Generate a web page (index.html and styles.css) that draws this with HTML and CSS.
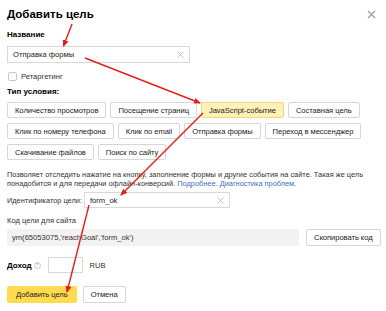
FILE: index.html
```html
<!DOCTYPE html>
<html lang="ru">
  <head>
    <meta charset="utf-8" />
    <meta name="viewport" content="width=device-width, initial-scale=1" />
    <title>Добавить цель</title>
    <link rel="stylesheet" href="styles.css">
  </head>
  <body>
    <div class="dialog">
      <!-- Header -->
      <div class="dialog-head">
        <h1 class="dialog-title">Добавить цель</h1>
        <svg class="close" width="9" height="9" viewBox="0 0 9 9">
          <path d="M1 1L8 8M8 1L1 8" stroke="#999" stroke-width="1.1" fill="none" />
        </svg>
      </div>

      <!-- Goal name -->
      <div class="field-label">Название</div>
      <div class="input input-name">
        <span>Отправка формы</span>
        <svg class="clear" width="7" height="7" viewBox="0 0 7 7">
          <path d="M0.5 0.5L6.5 6.5M6.5 0.5L0.5 6.5" stroke="#bbb" stroke-width="0.9" fill="none" />
        </svg>
      </div>

      <label class="check"><span class="check-box"></span>Ретаргетинг</label>

      <!-- Condition types -->
      <div class="field-label field-label-types">Тип условия:</div>
      <div class="types">
        <div class="types-row">
          <span class="btn">Количество просмотров</span>
          <span class="btn">Посещение страниц</span>
          <span class="btn btn-checked">JavaScript-событие</span>
          <span class="btn">Составная цель</span>
        </div>
        <div class="types-row">
          <span class="btn">Клик по номеру телефона</span>
          <span class="btn">Клик по email</span>
          <span class="btn">Отправка формы</span>
          <span class="btn">Переход в мессенджер</span>
        </div>
        <div class="types-row">
          <span class="btn">Скачивание файлов</span>
          <span class="btn">Поиск по сайту</span>
        </div>
      </div>

      <p class="hint">
        Позволяет отследить нажатие на кнопку, заполнение формы и другие события на сайте. Такая же цель<br>
        понадобится и для передачи офлайн-конверсий. <a href="#">Подробнее</a>. <a href="#">Диагностика проблем</a>.
      </p>

      <!-- Goal id -->
      <div class="id-row">
        <span class="id-label">Идентификатор цели:</span>
        <div class="input input-id">
          <span>form_ok</span>
          <svg class="clear" width="7" height="7" viewBox="0 0 7 7">
            <path d="M0.5 0.5L6.5 6.5M6.5 0.5L0.5 6.5" stroke="#bbb" stroke-width="0.9" fill="none" />
          </svg>
        </div>
      </div>

      <div class="sub-label">Код цели для сайта</div>
      <div class="code-row">
        <div class="code">ym(65053075,'reachGoal','form_ok')</div>
        <span class="btn">Скопировать код</span>
      </div>

      <!-- Income -->
      <div class="income-row">
        <span class="income-label">Доход</span>
        <span class="help">?</span>
        <div class="input input-income"></div>
        <span class="currency">RUB</span>
      </div>

      <div class="actions">
        <span class="btn btn-action">Добавить цель</span>
        <span class="btn">Отмена</span>
      </div>

      <!-- Red arrows drawn over the screenshot -->
      <svg class="arrows" width="386" height="311" viewBox="0 0 386 311">
        <defs>
          <marker id="head" markerWidth="8" markerHeight="8" refX="6" refY="3" orient="auto" markerUnits="userSpaceOnUse">
            <path d="M0 0L7 3L0 6Z" fill="#e3201b" />
          </marker>
        </defs>
        <g stroke="#e3201b" stroke-width="1.4" fill="none" marker-end="url(#head)">
          <line x1="72" y1="24" x2="63.5" y2="46" />
          <line x1="85" y1="58" x2="200" y2="103" />
          <line x1="203" y1="113" x2="121" y2="195" />
          <line x1="89" y1="205" x2="67" y2="292" />
        </g>
      </svg>
    </div>
  </body>
</html>
```

FILE: styles.css
```css
/* Page base */
body {
  margin: 0;
  background: #fff;
  font-family: "Liberation Sans", Arial, sans-serif;
  color: #000;
}

.dialog {
  position: relative;
  width: 386px;
  height: 311px;
  box-sizing: border-box;
  padding: 5px 7px 0;
  overflow: hidden;
}

/* Header */
.dialog-head {
  display: flex;
  justify-content: space-between;
  align-items: center;
  height: 18px;
}

.dialog-title {
  margin: 0;
  font-size: 11.5px;
  font-weight: bold;
}

.close {
  margin-right: 3px;
}

/* Labels */
.field-label {
  margin-top: 7px;
  font-size: 8px;
  font-weight: bold;
  line-height: 10px;
}

.field-label-types {
  margin-top: 6px;
}

.sub-label {
  margin-top: 8px;
  font-size: 7.6px;
  color: #333;
  line-height: 10px;
}

/* Inputs */
.input {
  display: flex;
  align-items: center;
  justify-content: space-between;
  box-sizing: border-box;
  height: 17px;
  padding: 0 5px;
  border: 1px solid #d9d9d9;
  font-size: 7.6px;
  color: #222;
}

.input-name {
  width: 183px;
  margin-top: 6px;
}

/* Checkbox */
.check {
  display: flex;
  align-items: center;
  gap: 4px;
  height: 10px;
  margin-top: 8px;
  font-size: 7.6px;
  color: #333;
}

.check-box {
  width: 7px;
  height: 7px;
  margin-left: 1px;
  border: 1px solid #c8c8c8;
  border-radius: 2px;
}

/* Condition type buttons */
.types {
  display: flex;
  flex-direction: column;
  gap: 5px;
  margin-top: 5px;
}

.types-row {
  display: flex;
  gap: 4px;
}

.btn {
  display: inline-flex;
  align-items: center;
  box-sizing: border-box;
  height: 16px;
  padding: 0 7px;
  border: 1px solid #d6d6d6;
  border-radius: 2px;
  background: #fff;
  font-size: 7.6px;
  letter-spacing: -0.05px;
  color: #222;
  white-space: nowrap;
}

.btn-checked {
  background: #fff1b8;
  border-color: #f0d77a;
}

.btn-action {
  padding: 0 8px;
  background: #ffdb4d;
  border-color: #ffdb4d;
}

/* Hint */
.hint {
  margin: 10px 0 0;
  font-size: 7.4px;
  line-height: 9px;
  color: #333;
}

.hint a {
  color: #3b6fc7;
  text-decoration: none;
}

/* Goal identifier */
.id-row {
  display: flex;
  align-items: center;
  gap: 2px;
  margin-top: 4px;
  font-size: 7.4px;
  color: #333;
}

.input-id {
  width: 146px;
  height: 16px;
}

/* Code */
.code-row {
  display: flex;
  gap: 7px;
  margin-top: 3px;
}

.code {
  flex: 0 0 292px;
  display: flex;
  align-items: center;
  box-sizing: border-box;
  height: 17px;
  padding: 0 5px;
  background: #f2f2f2;
  font-size: 7.6px;
  color: #333;
}

.code-row .btn {
  height: 17px;
  padding: 0 7px;
}

/* Income */
.income-row {
  display: flex;
  align-items: center;
  margin-top: 11px;
  font-size: 7.6px;
}

.income-label {
  font-size: 8px;
  font-weight: bold;
}

.help {
  display: inline-flex;
  align-items: center;
  justify-content: center;
  box-sizing: border-box;
  width: 7px;
  height: 7px;
  margin-left: 2px;
  border: 1px solid #ccc;
  border-radius: 50%;
  font-size: 5px;
  color: #aaa;
}

.input-income {
  width: 35px;
  height: 16px;
  margin-left: 7px;
}

.currency {
  margin-left: 7px;
  color: #333;
}

/* Footer buttons */
.actions {
  display: flex;
  gap: 6px;
  margin-top: 13px;
}

.actions .btn {
  height: 17px;
}

/* Arrow overlay */
.arrows {
  position: absolute;
  top: 0;
  left: 0;
  pointer-events: none;
}
```
